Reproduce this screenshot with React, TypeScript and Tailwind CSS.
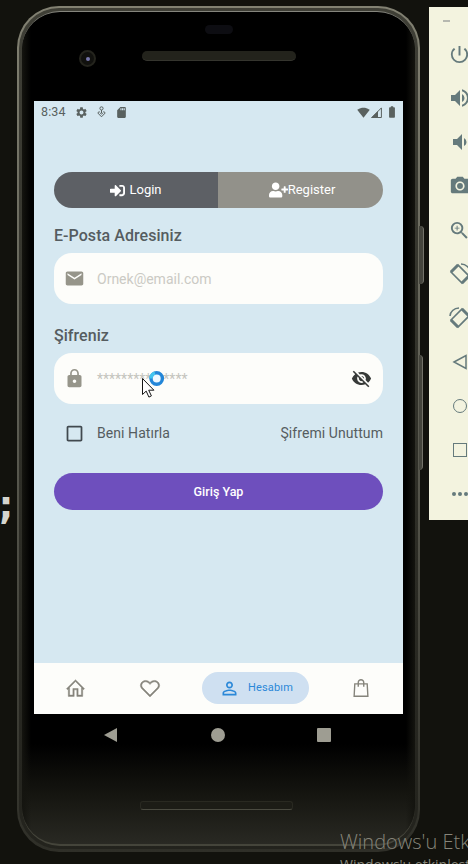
import { FaSignInAlt, FaUserPlus } from "react-icons/fa";
import { LiaHomeSolid, LiaHeart, LiaShoppingBagSolid } from "react-icons/lia";
import {
  MdBatteryFull,
  MdCheckBoxOutlineBlank,
  MdEmail,
  MdLock,
  MdPersonOutline,
  MdPhotoCamera,
  MdPowerSettingsNew,
  MdSdCard,
  MdSettings,
  MdSignalWifi4Bar,
  MdVisibilityOff,
  MdVolumeDown,
  MdVolumeUp,
  MdZoomIn,
} from "react-icons/md";

function StatusBar() {
  return (
    <div className="flex h-[22px] shrink-0 items-center pl-[7px] pr-1 text-[#59615f]">
      <span className="w-[34px] text-[12.5px] tracking-[0.1px]">8:34</span>
      <MdSettings size={13} />
      <svg className="ml-[9px] h-3 w-[9px]" viewBox="0 0 9 12" fill="none" stroke="currentColor">
        <circle cx="4.5" cy="2.4" r="1.600" />
        <path d="M2.400 5.200.8 7l3.700 3.800L8.200 7 6.600 5.200M4.500 4v3M2.800 6.500l1.700 1.800 1.700-1.800" />
      </svg>
      <MdSdCard className="ml-[9px]" size={13} />
      <div className="ml-auto flex items-center">
        <MdSignalWifi4Bar size={13} />
        <svg className="ml-[1px] h-[11px] w-[11px]" viewBox="0 0 11 11">
          <path d="M0 11 7 4v7z" fill="currentColor" />
          <path d="M.8 10.500 10.400.9v9.600z" fill="none" stroke="currentColor" />
        </svg>
        <MdBatteryFull className="ml-[3px]" size={14} />
      </div>
    </div>
  );
}

function BusyCursor() {
  return (
    <svg className="absolute left-[88px] top-4 h-8 w-7" viewBox="0 0 28 32">
      <circle cx="14.700" cy="9.500" r="5.700" fill="#eef8ff" stroke="#2386d8" strokeWidth="3.400" />
      <path d="M9 9.500a5.700 5.700 0 0 1 4-5.400" fill="none" stroke="#42c4ef" strokeWidth="3.400" />
      <path
        d="M.5 9.500v16l3.700-3.400 2.700 6 2.500-1.200-2.700-5.700h5.200z"
        fill="#fff"
        stroke="#161616"
      />
    </svg>
  );
}

function LoginScreen() {
  return (
    <div className="flex h-[613px] w-[369px] flex-col bg-[#d6e8f1]">
      <StatusBar />
      <main className="flex flex-1 flex-col px-5 pt-[49px] text-[#555c60]">
        <div className="flex h-9 shrink-0 overflow-hidden rounded-full text-[13px] text-white">
          <div className="flex w-[164px] items-center justify-center gap-1 bg-[#5d6065]">
            <FaSignInAlt size={15} />
            <span>Login</span>
          </div>
          <div className="flex flex-1 items-center justify-center bg-[#92918a] pl-[3px]">
            <FaUserPlus size={16} className="w-[19px]" />
            <span>Register</span>
          </div>
        </div>
        <h2 className="mt-[17px] h-5 text-base font-medium leading-[21px] tracking-[0.05px]">E-Posta Adresiniz</h2>
        <div className="mt-2 flex h-[51px] items-center rounded-[18px] bg-[#fdfdfa] pl-[10px]">
          <MdEmail size={21} className="text-[#96958a]" />
          <span className="ml-3 text-sm text-[#cbcac4]">Ornek@email.com</span>
        </div>
        <h2 className="mt-[21px] h-5 text-base font-medium leading-[21px] tracking-[0.05px]">Şifreniz</h2>
        <div className="relative mt-2 flex h-[51px] items-center rounded-[18px] bg-[#fdfdfa] pl-[10px] pr-[11px]">
          <MdLock size={21} className="text-[#96958a]" />
          <span className="ml-3 text-sm text-[#c4c4bd]">***************</span>
          <MdVisibilityOff size={21} className="ml-auto text-[#373a38]" />
          <BusyCursor />
        </div>
        <div className="mt-[19px] flex h-5 items-center text-sm tracking-[0.07px]">
          <MdCheckBoxOutlineBlank size={21} className="ml-[10px] text-[#41494f]" />
          <span className="ml-3">Beni Hatırla</span>
          <span className="ml-auto">Şifremi Unuttum</span>
        </div>
        <button className="mt-[30px] h-[37px] rounded-full bg-[#6e4fbd] pt-px text-[12.5px] font-medium text-white">
          Giriş Yap
        </button>
      </main>
      <nav className="flex h-[51px] items-center bg-[#fdfdfa] pb-px text-[#85847b]">
        <LiaHomeSolid size={21} strokeWidth={0.7} className="ml-[31px]" />
        <LiaHeart size={22} strokeWidth={0.7} className="ml-[53px]" />
        <div className="ml-[41px] flex h-8 w-[107px] items-center rounded-full bg-[#cfe0f1] pl-[17px] text-[#2b88d8]">
          <MdPersonOutline size={21} />
          <span className="ml-2 text-[11px] tracking-[0.15px]">Hesabım</span>
        </div>
        <LiaShoppingBagSolid size={22} className="ml-[41px]" />
      </nav>
    </div>
  );
}

function RotateIcon({ mirrored = false }: { mirrored?: boolean }) {
  return (
    <svg
      className={mirrored ? "h-6 w-6 -scale-x-100" : "h-6 w-6"}
      viewBox="0 0 24 24"
      fill="none"
      stroke="currentColor"
      strokeWidth="1.600"
    >
      <path d="m3 10 7-7 11 11-7 7z" />
      <path d="m3 10 7-7M14 21l7-7" strokeWidth="3" />
      <path d="M13 2c5 0 9 4 9 8" />
    </svg>
  );
}

function EmulatorToolbar() {
  return (
    <aside className="mt-[7px] h-[513px] w-[39px] shrink-0 overflow-hidden bg-[#f3f3df] text-[#657a7c]">
      <div className="flex h-[25px] w-[61px] pl-[14px] pt-[13px]">
        <div className="h-0.5 w-[7px] bg-[#b6b8b0]" />
      </div>
      <div className="flex w-[61px] flex-col items-center">
        <div className="flex h-11 items-center"><MdPowerSettingsNew size={23} /></div>
        <div className="flex h-11 items-center"><MdVolumeUp size={24} /></div>
        <div className="flex h-11 items-center"><MdVolumeDown size={24} /></div>
        <div className="flex h-11 items-center"><MdPhotoCamera size={22} /></div>
        <div className="flex h-11 items-center"><MdZoomIn size={23} /></div>
        <div className="flex h-11 items-center"><RotateIcon /></div>
        <div className="flex h-11 items-center"><RotateIcon mirrored /></div>
        <div className="flex h-11 items-center">
          <svg className="h-4 w-4" viewBox="0 0 16 16" fill="none" stroke="currentColor" strokeWidth="1.500">
            <path d="M2 8 14 1.500v13z" />
          </svg>
        </div>
        <div className="flex h-11 items-center"><div className="h-3.5 w-3.5 rounded-full border-[1.5px] border-current" /></div>
        <div className="flex h-11 items-center"><div className="h-3.5 w-3.5 border-[1.5px] border-current" /></div>
        <div className="flex h-11 items-center gap-0.5">
          <i className="h-1 w-1 rounded-full bg-current" />
          <i className="h-1 w-1 rounded-full bg-current" />
          <i className="h-1 w-1 rounded-full bg-current" />
        </div>
      </div>
    </aside>
  );
}

function Phone() {
  return (
    <div className="relative ml-[17px] mt-1.5 h-[846px] w-[403px] shrink-0 rounded-[42px] bg-gradient-to-b from-[#828172] via-[#5b5b51] via-50% to-[#2f2f28] px-[2px] pb-[3px] pt-[2px]">
      <div className="absolute left-[402px] top-[220px] h-[58px] w-[5px] rounded-r-sm border-r border-[#74736a] bg-[#45453d]" />
      <div className="absolute left-[402px] top-[349px] h-[115px] w-1 rounded-r-sm border-r border-[#74736a] bg-[#45453d]" />
      <div className="h-full rounded-[40px] bg-gradient-to-b from-[#3f3f36] to-[#23231d] p-[3px]">
        <div className="h-full rounded-[38px] border-b-2 border-t border-b-[#45453b] border-t-[#85857d] bg-[linear-gradient(to_bottom,#000_0%,#000_88%,#151510_94%,#292923_100%)]">
          <div className="h-full rounded-[38px] bg-[linear-gradient(to_right,#14140f,transparent_9px,transparent_384px,#14140f)] px-3">
            <div className="flex h-[89px] items-start pt-[36px]">
              <div className="ml-[45px] mt-[2px] flex h-[17px] w-[17px] items-center justify-center rounded-full border-2 border-[#24241d] bg-[#11110e]">
                <i className="h-1 w-1 rounded-full bg-[#7777aa]" />
              </div>
              <div className="relative ml-[46px] mt-[3px] h-[10px] w-[154px] rounded-full border-b border-[#35352e] bg-[#23231c]">
                <div className="absolute -top-[26px] left-[63px] h-[9px] w-[28px] rounded-full bg-[#0d0d12]" />
              </div>
            </div>
            <div className="w-[369px]"><LoginScreen /></div>
            <div className="flex h-[42px] items-center pl-[70px] text-[#9e9d92]">
              <svg className="h-[14px] w-[13px]" viewBox="0 0 13 14"><path d="M0 7 13 0v14z" fill="currentColor" /></svg>
              <div className="ml-[94px] h-[14px] w-[14px] rounded-full bg-current" />
              <div className="ml-[92px] h-[14px] w-[14px] rounded-[1px] bg-current" />
            </div>
            <div className="ml-[106px] mt-[45px] h-[9px] w-[153px] rounded-[3px] border border-[#292921] border-b-[#4a4a40] bg-[#1c1c16]" />
          </div>
        </div>
      </div>
    </div>
  );
}

export default function App() {
  return (
    <div className="relative flex h-[864px] w-[468px] items-start overflow-hidden bg-[#12120d] font-['Roboto','Noto_Sans',sans-serif]">
      <span className="absolute -left-[6px] top-[478px] font-['DejaVu_Sans_Mono',monospace] text-[40px] font-bold leading-[52px] text-[#d5d5ce]">;</span>
      <Phone />
      <div className="ml-[9px]"><EmulatorToolbar /></div>
      <div className="absolute left-[340px] top-[828px] whitespace-nowrap font-['Open_Sans','Noto_Sans',sans-serif] text-[#86857a]">
        <div className="text-[20px] font-light leading-[27px]">Windows'u Etkinleştir</div>
        <div className="text-[14px] leading-[19px]">Windows'u etkinleştirmek</div>
      </div>
    </div>
  );
}
